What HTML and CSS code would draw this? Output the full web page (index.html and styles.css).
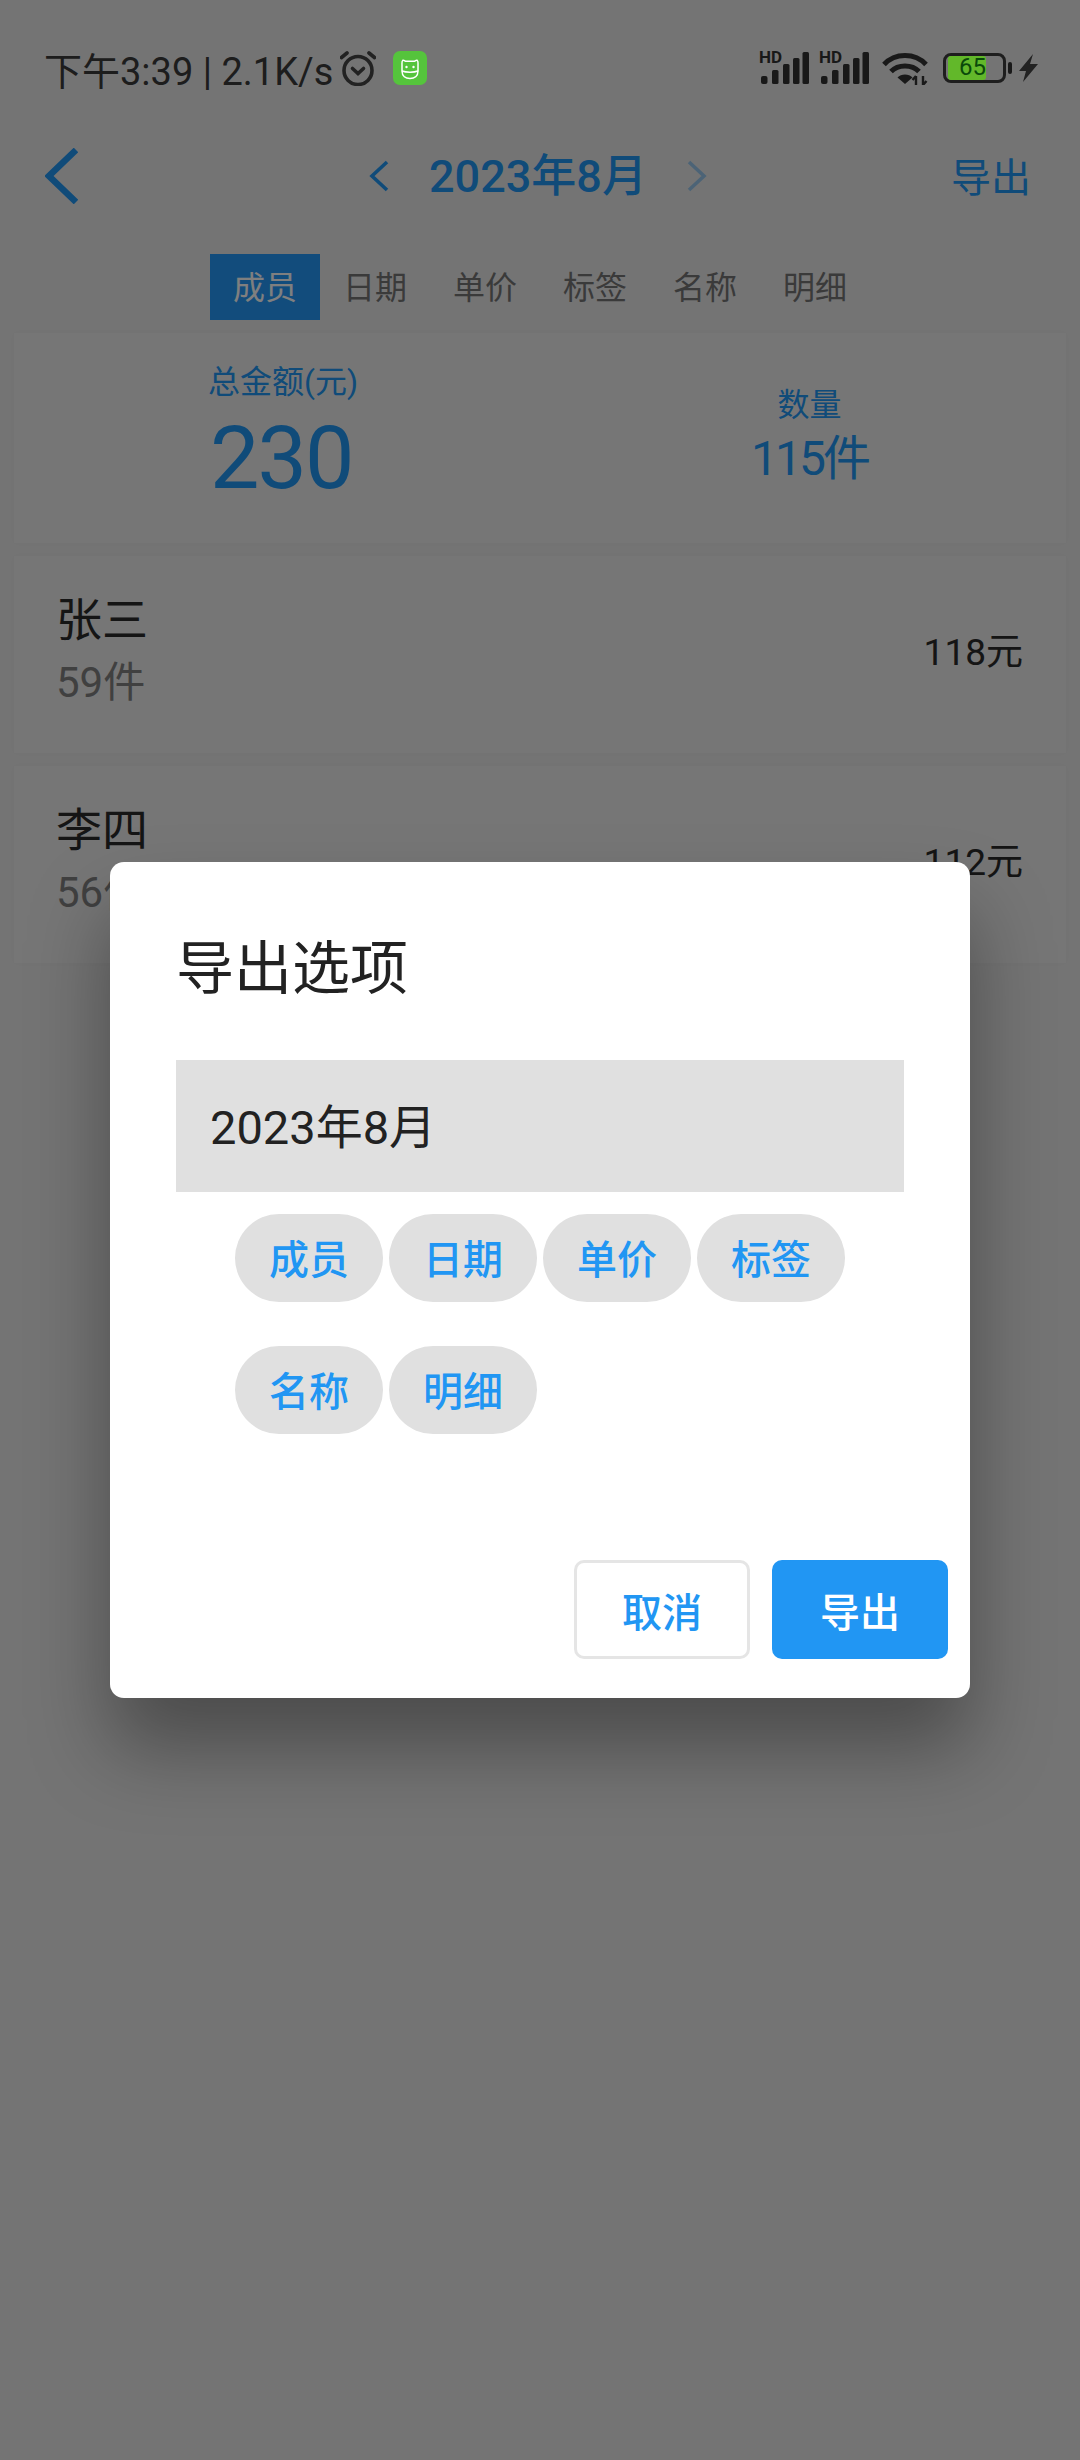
FILE: index.html
```html
<!DOCTYPE html>
<html lang="zh-CN">
<head>
    <meta charset="UTF-8">
    <meta name="viewport" content="width=device-width, initial-scale=1.0">
    <title>导出选项</title>
    <link rel="stylesheet" href="styles.css">
</head>
<body>
    <div class="page">
        <!-- status bar -->
        <div class="status">
            <div class="status-left">
                <span class="status-text">下午3:39 | 2.1K/s</span>
                <svg class="alarm" viewBox="0 0 36 36" fill="none" stroke="#444" stroke-width="3.6" stroke-linecap="round">
                    <circle cx="18" cy="20.5" r="14"/>
                    <path d="M1.5 7.5 7 3M34.5 7.5 29 3"/>
                    <path d="M12.5 18.5 18 23.5 23.5 18.5"/>
                </svg>
                <svg class="app-icon" viewBox="0 0 34 34">
                    <rect width="34" height="34" rx="7" fill="#55c43c"/>
                    <g fill="none" stroke="#fff" stroke-width="1.5">
                        <path d="M9 14C9 12 8.6 10 9.8 9.3 11.2 8.8 12 10.3 13 10.3H21C22 10.3 22.8 8.8 24.2 9.3 25.4 10 25 12 25 14V20C25 25 21.5 27.5 17 27.5 12.5 27.5 9 25 9 20Z"/>
                        <path d="M9 20C13 21.5 21 21.5 25 20"/>
                    </g>
                    <circle cx="13.5" cy="16" r="1.2" fill="#fff"/>
                    <circle cx="20.5" cy="16" r="1.2" fill="#fff"/>
                </svg>
            </div>
            <div class="status-right">
                <div class="signal">
                    <span class="hd">HD</span>
                    <svg viewBox="0 0 48 32" fill="#333">
                        <rect x="0" y="24" width="6.5" height="8" rx="2"/>
                        <rect x="11" y="18" width="6.5" height="14" rx="1.5"/>
                        <rect x="22" y="12" width="6.5" height="20" rx="1.5"/>
                        <rect x="32" y="6" width="6.5" height="26" rx="1.5"/>
                        <rect x="41.5" y="0" width="6.5" height="32" rx="1.5"/>
                    </svg>
                </div>
                <div class="signal">
                    <span class="hd">HD</span>
                    <svg viewBox="0 0 48 32" fill="#333">
                        <rect x="0" y="24" width="6.5" height="8" rx="2"/>
                        <rect x="11" y="18" width="6.5" height="14" rx="1.5"/>
                        <rect x="22" y="12" width="6.5" height="20" rx="1.5"/>
                        <rect x="32" y="6" width="6.5" height="26" rx="1.5"/>
                        <rect x="41.5" y="0" width="6.5" height="32" rx="1.5"/>
                    </svg>
                </div>
                <svg class="wifi" viewBox="0 0 46 34" fill="none" stroke="#333" stroke-width="5">
                    <path d="M2 13.5C13 1.5 33 1.5 44 13.5"/>
                    <path d="M9 20.5C16 13 30 13 37 20.5"/>
                    <path d="M23 33 15.5 26.5C19 22.5 27 22.5 30.5 26.5Z" fill="#333" stroke="none"/>
                    <path d="M34 34V25M30.5 29 34 25M41 25V34M41 34 44.5 30" stroke-width="2.4"/>
                </svg>
                <div class="battery">
                    <div class="battery-box">
                        <div class="battery-fill"></div>
                        <span class="battery-num">65</span>
                    </div>
                    <div class="battery-nub"></div>
                </div>
                <svg class="bolt" viewBox="0 0 19 28" fill="#444">
                    <path d="M14 0 0 17H7L4 28 19 10H11Z"/>
                </svg>
            </div>
        </div>

        <!-- title bar -->
        <div class="nav">
            <svg class="nav-back" viewBox="0 0 33 56" fill="none" stroke="#2196f3" stroke-width="6.5">
                <path d="M31 2 4 28 31 54"/>
            </svg>
            <div class="nav-center">
                <svg class="month-arrow" viewBox="0 0 20 32" fill="none" stroke="#2196f3" stroke-width="3.6">
                    <path d="M18 2 3 16 18 30"/>
                </svg>
                <span class="nav-title">2023年8月</span>
                <svg class="month-arrow month-next" viewBox="0 0 20 32" fill="none" stroke="#2196f3" stroke-width="3.6">
                    <path d="M2 2 17 16 2 30"/>
                </svg>
            </div>
            <span class="nav-action">导出</span>
        </div>

        <div class="tabs">
            <span class="tab tab-active">成员</span>
            <span class="tab">日期</span>
            <span class="tab">单价</span>
            <span class="tab">标签</span>
            <span class="tab">名称</span>
            <span class="tab">明细</span>
        </div>

        <div class="list">
            <div class="card stats">
                <div class="stat-main">
                    <div class="stat-label">总金额(元)</div>
                    <div class="stat-total">230</div>
                </div>
                <div class="stat-side">
                    <div class="stat-side-label">数量</div>
                    <div class="stat-count">115件</div>
                </div>
            </div>
            <div class="card row">
                <div>
                    <div class="row-name">张三</div>
                    <div class="row-count">59件</div>
                </div>
                <div class="row-price">118元</div>
            </div>
            <div class="card row">
                <div>
                    <div class="row-name">李四</div>
                    <div class="row-count">56件</div>
                </div>
                <div class="row-price">112元</div>
            </div>
        </div>

        <!-- export dialog -->
        <div class="overlay">
            <div class="dialog">
                <h2 class="dialog-title">导出选项</h2>
                <div class="month-field">2023年8月</div>
                <div class="chips">
                    <span class="chip">成员</span>
                    <span class="chip">日期</span>
                    <span class="chip">单价</span>
                    <span class="chip">标签</span>
                    <span class="chip">名称</span>
                    <span class="chip">明细</span>
                </div>
                <div class="dialog-buttons">
                    <button class="btn btn-cancel">取消</button>
                    <button class="btn btn-ok">导出</button>
                </div>
            </div>
        </div>
    </div>
</body>
</html>
```

FILE: styles.css
```css
* {
    box-sizing: border-box;
}

body {
    margin: 0;
    font-family: Roboto, "Noto Sans CJK SC", sans-serif;
    background-color: #e9e9e9;
}

.page {
    position: relative;
    width: 1080px;
    height: 2460px;
    overflow: hidden;
}

/* status bar */
.status {
    height: 136px;
    padding: 0 42px 0 44px;
    display: flex;
    justify-content: space-between;
    align-items: center;
}

.status-left,
.status-right {
    display: flex;
    align-items: center;
}

.status-text {
    font-size: 38px;
    color: #3a3a3a;
    white-space: nowrap;
}

.alarm {
    width: 36px;
    height: 36px;
    margin-left: 7px;
}

/* these stay bright in the screenshot, so they sit over the scrim */
.app-icon {
    position: relative;
    z-index: 2;
    width: 34px;
    height: 34px;
    margin-left: 17px;
}

.signal {
    position: relative;
    width: 48px;
    height: 32px;
    margin-right: 12px;
}

.signal svg {
    display: block;
    width: 48px;
    height: 32px;
}

.hd {
    position: absolute;
    left: -2px;
    top: -2px;
    font-size: 17px;
    line-height: 15px;
    font-weight: 700;
    color: #333;
}

.wifi {
    width: 48px;
    height: 34px;
    margin-right: 14px;
}

.battery {
    display: flex;
    align-items: center;
}

.battery-box {
    position: relative;
    z-index: 2;
    width: 63px;
    height: 30px;
    border: 3.5px solid #1e1e1e;
    border-radius: 8px;
}

.battery-fill {
    width: 38px;
    height: 100%;
    margin-left: 2px;
    background-color: #62b82a;
    border-radius: 3px;
}

.battery-num {
    position: absolute;
    left: 13px;
    top: 0;
    font-size: 24px;
    line-height: 23px;
    color: #0a4a0a;
}

.battery-nub {
    width: 4px;
    height: 12px;
    margin-left: 2px;
    background-color: #333;
    border-radius: 2px;
}

.bolt {
    width: 19px;
    height: 28px;
    margin-left: 7px;
}

/* title bar */
.nav {
    position: relative;
    height: 80px;
    padding: 0 49px 0 45px;
    display: flex;
    justify-content: space-between;
    align-items: center;
}

.nav-back {
    width: 33px;
    height: 56px;
}

.nav-center {
    display: flex;
    align-items: center;
    gap: 40px;
    margin-left: 291px;
}

.month-arrow {
    width: 20px;
    height: 32px;
}

.month-next {
    opacity: 0.4;
}

.nav-title {
    font-size: 45px;
    font-weight: 500;
    margin-bottom: 8px;
    color: #2196f3;
    white-space: nowrap;
}

.nav-action {
    font-size: 40px;
    line-height: 86px;
    height: 80px;
    color: #2196f3;
    margin-left: auto;
}

.tabs {
    margin-top: 38px;
    padding-left: 210px;
    display: flex;
}

.tab {
    width: 110px;
    height: 66px;
    line-height: 68px;
    text-align: center;
    font-size: 32px;
    color: #757575;
}

.tab-active {
    background-color: #2499f8;
    color: #fff;
}

/* cards */
.list {
    margin-top: 13px;
    padding: 0 14px;
    display: flex;
    flex-direction: column;
    gap: 13px;
}

.card {
    background-color: #ececec;
    box-shadow: 0 0 8px rgba(0, 0, 0, 0.03);
    display: flex;
    justify-content: space-between;
    align-items: center;
}

.stats {
    height: 210px;
    padding: 0 198px 0 194px;
}

.stat-main {
    padding-bottom: 8px;
}

.stat-label {
    font-size: 32px;
    line-height: 40px;
    margin-bottom: 8px;
    color: #2196f3;
}

.stat-total {
    font-size: 88px;
    line-height: 96px;
    letter-spacing: -2px;
    color: #2196f3;
    margin-left: 2px;
}

.stat-side {
    text-align: center;
    padding-bottom: 4px;
}

.stat-side-label {
    font-size: 32px;
    line-height: 46px;
    color: #2196f3;
}

.stat-count {
    font-size: 48px;
    line-height: 62px;
    letter-spacing: -3px;
    color: #2196f3;
}

.row {
    height: 197px;
    padding: 0 43px 12px 42px;
}

.row-name {
    font-size: 46px;
    line-height: 62px;
    padding-top: 5px;
    color: #2a2a2a;
}

.row-count {
    font-size: 42px;
    line-height: 60px;
    margin-top: 2px;
    color: #808080;
}

.row-price {
    font-size: 37px;
    color: #2a2a2a;
}

/* dialog */
.overlay {
    position: absolute;
    left: 0;
    top: 0;
    width: 100%;
    height: 100%;
    z-index: 1;
    padding-top: 862px;
    background-color: rgba(0, 0, 0, 0.5);
    display: flex;
    justify-content: center;
    align-items: flex-start;
}

.dialog {
    width: 860px;
    height: 836px;
    padding: 0 22px 39px 66px;
    background-color: #fff;
    border-radius: 14px;
    box-shadow: 0 50px 80px rgba(0, 0, 0, 0.35);
    display: flex;
    flex-direction: column;
}

.dialog-title {
    margin: 73px 0 0;
    height: 125px;
    font-size: 58px;
    line-height: 68px;
    font-weight: 400;
    color: #222;
}

.month-field {
    width: 728px;
    height: 132px;
    line-height: 136px;
    padding-left: 34px;
    font-size: 47px;
    color: #222;
    background-color: #e0e0e0;
}

.chips {
    margin: 22px 0 0 59px;
    display: flex;
    flex-wrap: wrap;
    gap: 44px 6px;
    width: 620px;
}

.chip {
    width: 148px;
    height: 88px;
    line-height: 94px;
    text-align: center;
    font-size: 40px;
    font-weight: 500;
    color: #2196f3;
    background-color: #e0e0e0;
    border-radius: 44px;
}

.dialog-buttons {
    margin-top: auto;
    display: flex;
    justify-content: flex-end;
    gap: 22px;
}

.btn {
    width: 176px;
    height: 99px;
    font-family: inherit;
    font-size: 40px;
    font-weight: 500;
    border-radius: 10px;
}

.btn-cancel {
    background-color: #fff;
    border: 3px solid #e5e5e5;
    color: #2196f3;
}

.btn-ok {
    background-color: #2196f3;
    border: none;
    color: #fff;
}
```
